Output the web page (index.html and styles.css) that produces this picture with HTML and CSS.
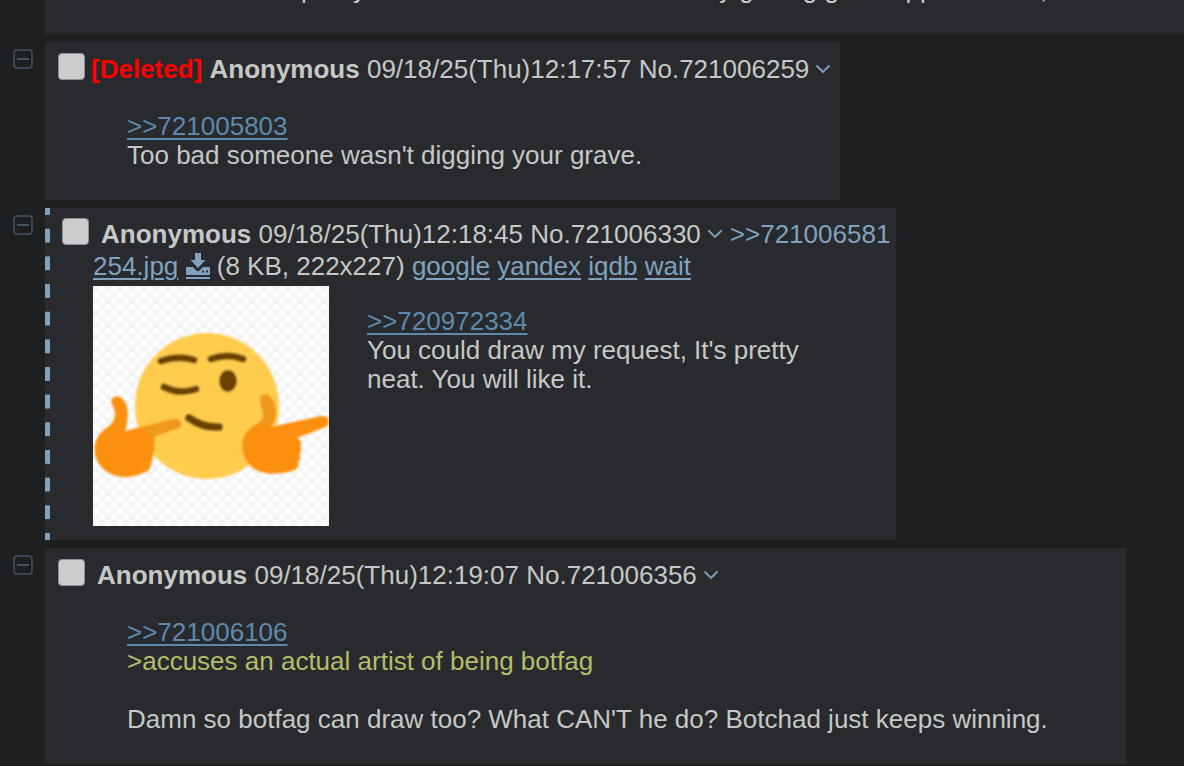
FILE: index.html
```html
<!DOCTYPE html>
<html lang="en">

<head>
    <meta charset="UTF-8">
    <meta name="viewport" content="width=device-width, initial-scale=1.0">
    <title>Thread</title>
    <link rel="stylesheet" href="styles.css">
</head>

<body>
    <svg class="defs" aria-hidden="true">
        <symbol id="collapse" viewBox="0 0 20 20">
            <rect x="1" y="1" width="18" height="18" rx="3" fill="none" stroke="currentColor" stroke-width="1.5"/>
            <path d="M4 10h12" stroke="currentColor" stroke-width="2"/>
        </symbol>
        <symbol id="chevron" viewBox="0 0 16 10">
            <path d="M1.500 1.500L8 8l6.500-6.500" fill="none" stroke="currentColor" stroke-width="1.800"/>
        </symbol>
    </svg>

    <main class="thread">
        <div class="reply-row first">
            <article class="post wide">
                <blockquote class="message first-message">
                    <span>pretty</span>
                    <span class="line-end">y getting great opportunities,</span>
                </blockquote>
            </article>
        </div>

        <div class="reply-row">
            <button class="collapse" aria-label="Hide post"><svg><use href="#collapse"/></svg></button>
            <article class="post">
                <header class="post-info">
                    <input type="checkbox" aria-label="Select post 721006259">
                    <span><strong class="deleted">[Deleted]</strong> <strong>Anonymous</strong> 09/18/25(Thu)12:17:57 No.721006259</span>
                    <button class="menu" aria-label="Post menu"><svg><use href="#chevron"/></svg></button>
                </header>
                <blockquote class="message">
                    <a class="quote" href="#p721005803">&gt;&gt;721005803</a><br>
                    Too bad someone wasn't digging your grave.
                </blockquote>
            </article>
        </div>

        <div class="reply-row">
            <button class="collapse" aria-label="Hide post"><svg><use href="#collapse"/></svg></button>
            <article class="post own">
                <header class="post-info">
                    <input type="checkbox" aria-label="Select post 721006330">
                    <span class="name-block"><strong>Anonymous</strong> 09/18/25(Thu)12:18:45 No.721006330</span>
                    <button class="menu" aria-label="Post menu"><svg><use href="#chevron"/></svg></button>
                    <a class="backlink" href="#p721006581">&gt;&gt;721006581</a>
                </header>
                <div class="file-info">
                    <a href="#file">254.jpg</a>
                    <a class="download" href="#download" aria-label="Download"><svg viewBox="0 0 24 22" fill="currentColor"><path d="M9 0h6v7h4.500L12 15 4.500 7H9z"/><path fill-rule="evenodd" d="M1 14h6l3.500 3.500q1.500 1.300 3 0L17 14h6q1 0 1 1v6q0 1-1 1H1q-1 0-1-1v-6q0-1 1-1zM16 17.500v2h2v-2zM20 17.500v2h2v-2z"/></svg></a>
                    (8 KB, 222x227)
                    <a href="#google">google</a> <a href="#yandex">yandex</a> <a href="#iqdb">iqdb</a> <a href="#wait">wait</a>
                </div>
                <div class="post-body">
                    <a class="thumb" href="#file" aria-label="254.jpg">
                        <svg viewBox="0 0 236 240">
                            <defs>
                                <pattern id="checks" width="12" height="12" patternUnits="userSpaceOnUse">
                                    <rect width="12" height="12" fill="#fdfdfd"/>
                                    <path d="M0 0h6v6H0zM6 6h6v6H6z" fill="#f4f4f4"/>
                                </pattern>
                                <filter id="soft"><feGaussianBlur stdDeviation="1"/></filter>
                            </defs>
                            <rect width="236" height="240" fill="url(#checks)"/>
                            <g filter="url(#soft)">
                                <ellipse cx="114" cy="120" rx="72" ry="73" fill="#ffcc4d"/>
                                <g fill="none" stroke="#6b4205" stroke-linecap="round" stroke-width="7">
                                    <path d="M68 75Q85 69 101 74"/>
                                    <path d="M118 73Q135 67 150 73"/>
                                    <path d="M71 101Q87 109 103 103"/>
                                    <path d="M96 132Q110 142 126 141" stroke-width="8"/>
                                </g>
                                <ellipse cx="135" cy="95" rx="9" ry="11" fill="#6b4205"/>
                                <path d="M18 115C20 107 31 109 34 121Q36 132 32 145L80 133Q87 132 88 138Q88 142 83 143L61 151Q63 155 61 158Q62 164 60 168Q60 173 58 178Q58 185 50 187Q31 195 16 187C-3 176-2 153 12 143Q23 136 22 126Z" fill="#fa900d"/>
                                <path d="M50 141L80 133Q87 132 88 138Q88 142 83 143L57 151Z" fill="#f0981a"/>
                                <path d="M167 115Q167 107 174 108Q183 114 183 126Q183 134 178 141L228 130Q236 129 236 136Q235 141 230 142L204 152Q210 155 207 160Q210 164 206 169Q209 173 205 176Q207 183 199 185Q177 191 163 184C143 171 146 145 164 138Q174 132 168 121Z" fill="#fa900d"/>
                                <path d="M167 115Q167 107 174 108Q183 114 183 126L177 139L166 138Q174 132 168 121Z" fill="#f0981a"/>
                            </g>
                        </svg>
                    </a>
                    <blockquote class="message">
                        <a class="quote" href="#p720972334">&gt;&gt;720972334</a><br>
                        You could draw my request, It's pretty neat. You will like it.
                    </blockquote>
                </div>
            </article>
        </div>

        <div class="reply-row">
            <button class="collapse" aria-label="Hide post"><svg><use href="#collapse"/></svg></button>
            <article class="post">
                <header class="post-info">
                    <input type="checkbox" aria-label="Select post 721006356">
                    <span class="name-block"><strong>Anonymous</strong> 09/18/25(Thu)12:19:07 No.721006356</span>
                    <button class="menu" aria-label="Post menu"><svg><use href="#chevron"/></svg></button>
                </header>
                <blockquote class="message">
                    <a class="quote" href="#p721006106">&gt;&gt;721006106</a><br>
                    <span class="greentext">&gt;accuses an actual artist of being botfag</span><br>
                    <br>
                    Damn so botfag can draw too? What CAN'T he do? Botchad just keeps winning.
                </blockquote>
            </article>
        </div>
    </main>
</body>

</html>
```

FILE: styles.css
```css
* {
    box-sizing: border-box;
}

body {
    margin: 0;
    overflow: hidden;
    background: #1d1f21;
    color: #c5c8c6;
    font: 26px/29px "Liberation Sans", Arial, sans-serif;
}

a {
    color: #81a2be;
    text-underline-offset: 3px;
    text-decoration-thickness: 2px;
}

button {
    padding: 0;
    border: 0;
    background: none;
    color: #81a2be;
}

.defs {
    position: absolute;
    width: 0;
    height: 0;
}

.thread {
    display: flex;
    flex-direction: column;
    gap: 8px;
}

.reply-row {
    display: flex;
    align-items: flex-start;
    padding-left: 13px;
}

.reply-row.first {
    height: 34px;
    align-items: flex-end;
    padding-left: 45px;
}

.collapse {
    flex: none;
    width: 20px;
    height: 20px;
    margin: 7px 12px 0 0;
    color: #435363;
}

.collapse svg,
.menu svg,
.thumb svg {
    display: block;
    width: 100%;
    height: 100%;
}

.post {
    padding: 10px 9px 4px 13px;
    background: #282a2e;
}

.post.wide {
    flex: 1;
    padding: 0;
}

/* dashed marker down the left side of your own posts */
.post.own {
    width: 851px;
    max-width: 100%;
    padding: 9px 6px 14px 17px;
    background-image: linear-gradient(#81a2be 25%, transparent 25% 75%, #81a2be 75%);
    background-size: 5px 28px;
    background-repeat: no-repeat round;
}

.post-info {
    display: flex;
    align-items: center;
    white-space: nowrap;
    height: 34px;
}

input[type="checkbox"] {
    appearance: none;
    flex: none;
    width: 27px;
    height: 27px;
    margin: 0 6px 6px 0;
    border: 1px solid #8f8f9d;
    border-radius: 4px;
    background: #ccc;
}

.name-block {
    margin-left: 6px;
}

.deleted {
    color: red;
}

.menu {
    flex: none;
    width: 16px;
    height: 10px;
    margin-left: 6px;
}

.backlink {
    margin-left: 7px;
    text-decoration: none;
}

.message {
    margin: 26px 69px 26px;
}

.first-message {
    display: flex;
    margin: 0 0 30px 256px;
    white-space: nowrap;
}

.line-end {
    margin-left: 353px;
}

.quote {
    color: #5f89ac;
}

.greentext {
    color: #b5bd68;
}

.file-info {
    height: 31px;
    margin-left: 31px;
    line-height: 31px;
    white-space: nowrap;
}

.download {
    display: inline-block;
    padding-bottom: 2px;
    border-bottom: 2px solid;
    vertical-align: -4px;
}

.download svg {
    display: block;
    width: 24px;
    height: 22px;
}

.post-body {
    display: flex;
    align-items: flex-start;
    margin-left: 31px;
}

.thumb {
    flex: none;
    width: 236px;
    height: 240px;
    margin-top: 4px;
}

.post-body .message {
    margin: 25px 60px 0 38px;
}
```
